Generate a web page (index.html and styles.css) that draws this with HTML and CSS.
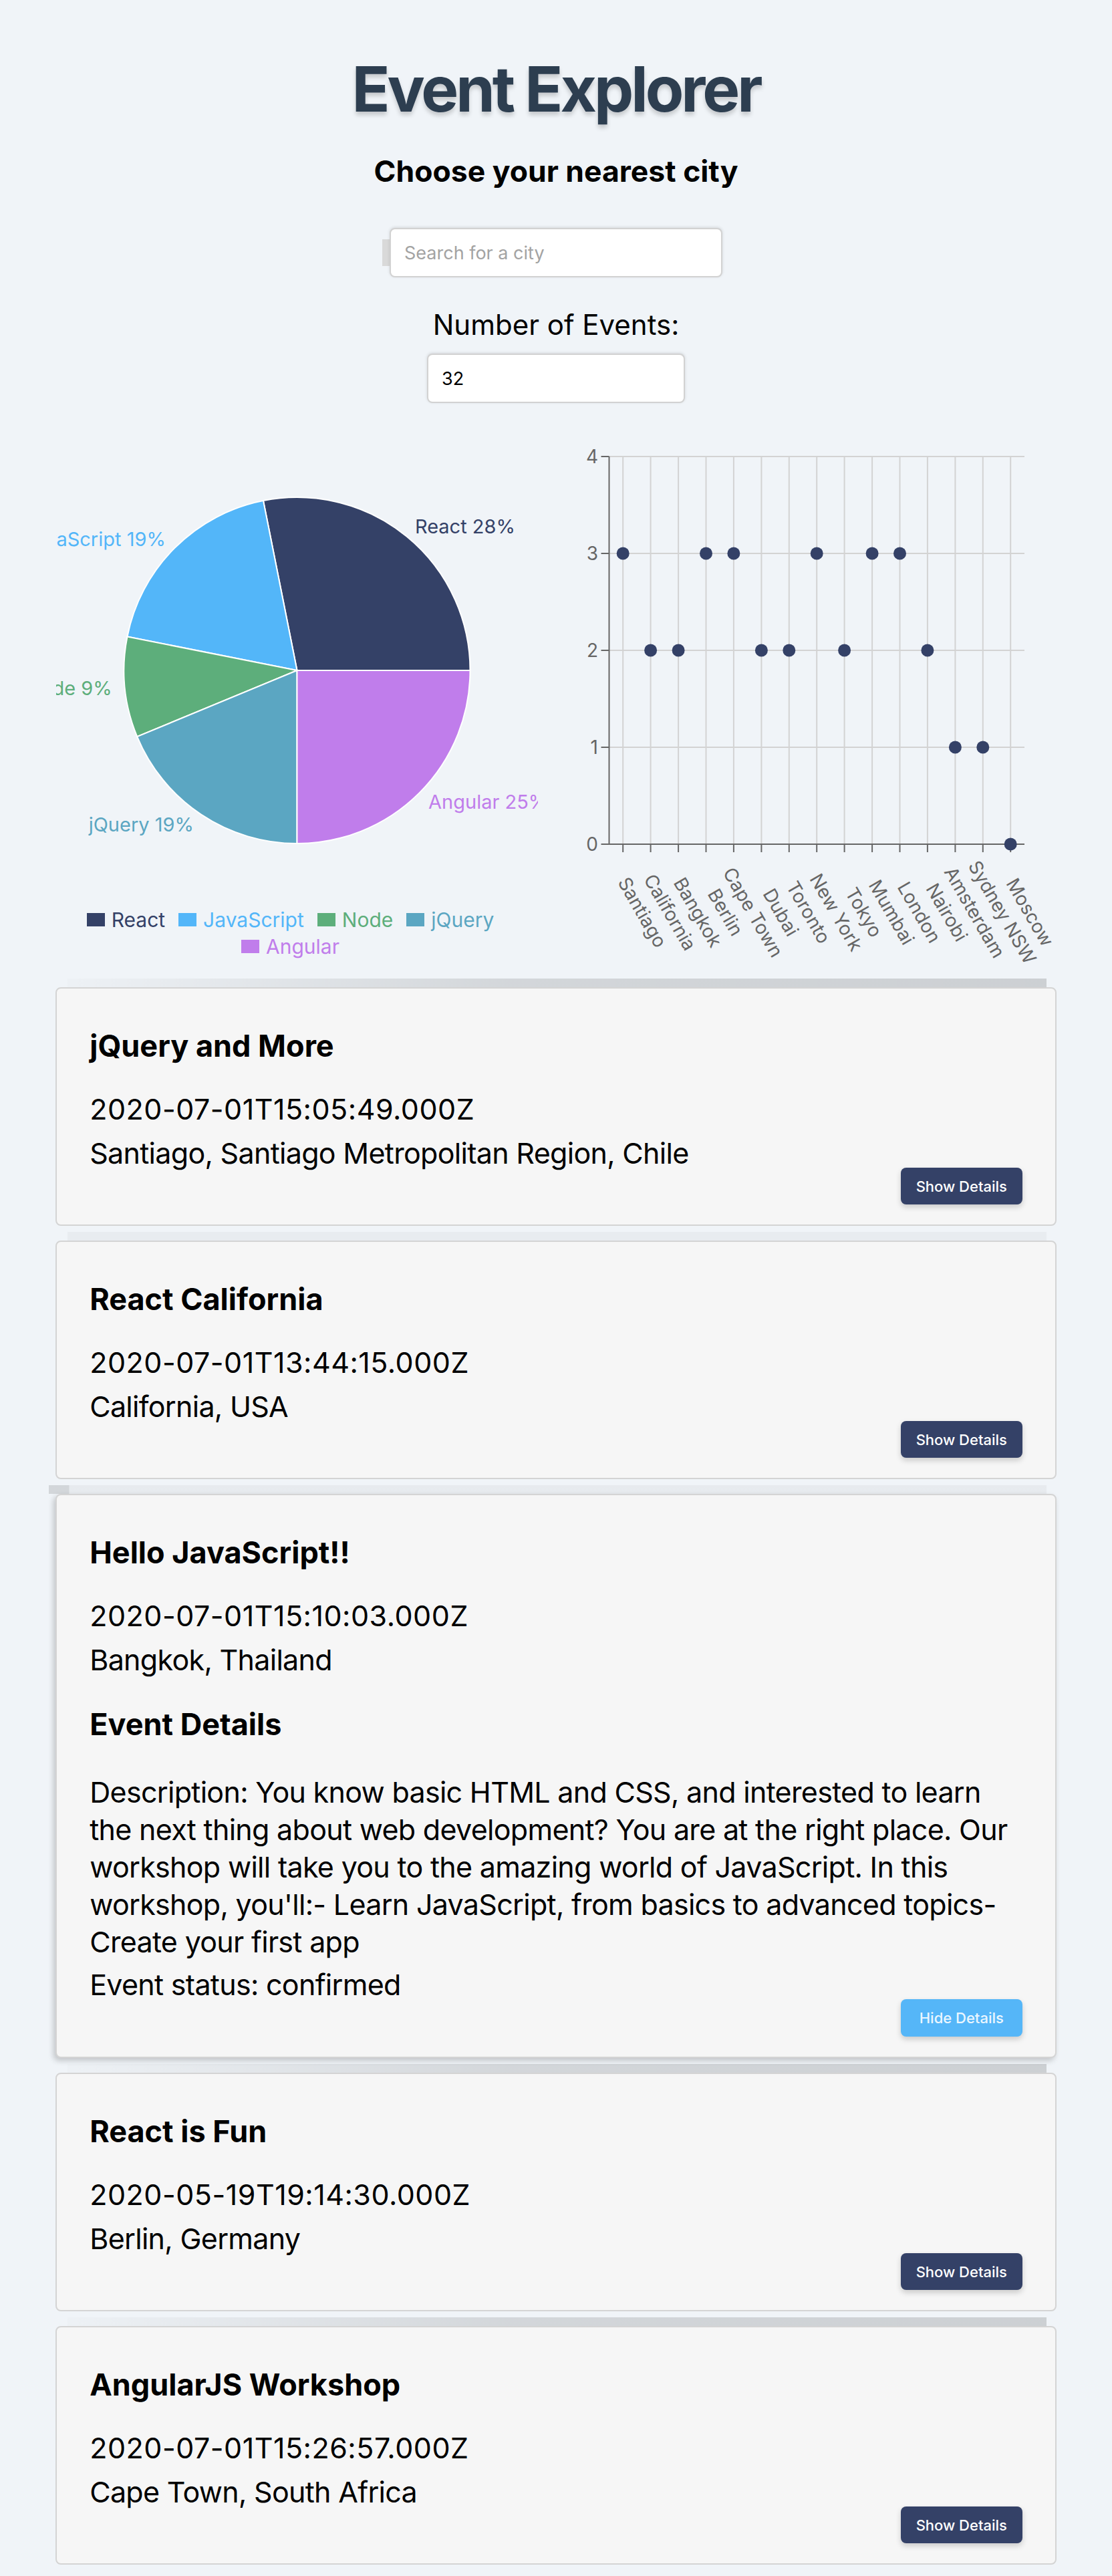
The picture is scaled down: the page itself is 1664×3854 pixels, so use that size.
FILE: index.html
```html
<!DOCTYPE html>
<html lang="en">
<head>
<meta charset="utf-8">
<title>Event Explorer</title>
<link rel="stylesheet" href="styles.css">
</head>
<body>
<div class="app">
  <h1 class="app-title">Event Explorer</h1>
  <h2 class="city-heading">Choose your nearest city</h2>
  <div class="city-search">
    <span class="search-shadow"></span>
    <input class="city-input" type="text" placeholder="Search for a city">
  </div>
  <div class="number-events">
    <label class="number-label" for="number-input">Number of Events:</label>
    <input class="number-input" id="number-input" type="text" value="32">
  </div>

  <div class="charts">
    <div class="pie-wrap">
      <svg class="pie" width="721" height="690" viewBox="0 0 721 690">
        <g class="slices">
          <path fill="#344167" d="M360.5,343 L619.5,343 A259,259 0 0 0 309.97,88.98 Z"/>
          <path fill="#53b6f9" d="M360.5,343 L309.97,88.98 A259,259 0 0 0 106.48,292.47 Z"/>
          <path fill="#5dae7b" d="M360.5,343 L106.48,292.47 A259,259 0 0 0 121.21,442.12 Z"/>
          <path fill="#5ba6c2" d="M360.5,343 L121.21,442.12 A259,259 0 0 0 360.5,602 Z"/>
          <path fill="#c07deb" d="M360.5,343 L360.5,602 A259,259 0 0 0 619.5,343 Z"/>
        </g>
        <g class="pie-labels">
          <text x="536.9" y="128.1" dy="0.35em" fill="#344167">React 28%</text>
          <text x="163.9" y="146.4" dy="0.35em" text-anchor="end" fill="#53b6f9">JavaScript 19%</text>
          <text x="83.8" y="370.2" dy="0.35em" text-anchor="end" fill="#5dae7b">Node 9%</text>
          <text x="206" y="574.2" dy="0.35em" text-anchor="end" fill="#5ba6c2">jQuery 19%</text>
          <text x="557.1" y="539.6" dy="0.35em" fill="#c07deb">Angular 25%</text>
        </g>
      </svg>
      <ul class="legend">
        <li class="legend-item legend-react"><span class="legend-icon"></span>React</li>
        <li class="legend-item legend-js"><span class="legend-icon"></span>JavaScript</li>
        <li class="legend-item legend-node"><span class="legend-icon"></span>Node</li>
        <li class="legend-item legend-jquery"><span class="legend-icon"></span>jQuery</li>
        <li class="legend-item legend-angular"><span class="legend-icon"></span>Angular</li>
      </ul>
    </div>

    <svg class="scatter" width="800" height="800" viewBox="0 0 800 800">
      <g class="grid">
        <line x1="71.5" y1="23" x2="693" y2="23"/>
        <line x1="71.5" y1="168" x2="693" y2="168"/>
        <line x1="71.5" y1="313" x2="693" y2="313"/>
        <line x1="71.5" y1="458" x2="693" y2="458"/>
        <line x1="92.2" y1="23" x2="92.2" y2="603"/>
        <line x1="133.6" y1="23" x2="133.6" y2="603"/>
        <line x1="175.1" y1="23" x2="175.1" y2="603"/>
        <line x1="216.5" y1="23" x2="216.5" y2="603"/>
        <line x1="257.9" y1="23" x2="257.9" y2="603"/>
        <line x1="299.4" y1="23" x2="299.4" y2="603"/>
        <line x1="340.8" y1="23" x2="340.8" y2="603"/>
        <line x1="382.2" y1="23" x2="382.2" y2="603"/>
        <line x1="423.6" y1="23" x2="423.6" y2="603"/>
        <line x1="465.1" y1="23" x2="465.1" y2="603"/>
        <line x1="506.5" y1="23" x2="506.5" y2="603"/>
        <line x1="547.9" y1="23" x2="547.9" y2="603"/>
        <line x1="589.4" y1="23" x2="589.4" y2="603"/>
        <line x1="630.8" y1="23" x2="630.8" y2="603"/>
        <line x1="672.2" y1="23" x2="672.2" y2="603"/>
      </g>
      <g class="axis">
        <line x1="71.5" y1="23" x2="71.5" y2="604"/>
        <line x1="70.5" y1="603" x2="693" y2="603"/>
        <line x1="59.5" y1="23" x2="71.5" y2="23"/>
        <line x1="59.5" y1="168" x2="71.5" y2="168"/>
        <line x1="59.5" y1="313" x2="71.5" y2="313"/>
        <line x1="59.5" y1="458" x2="71.5" y2="458"/>
        <line x1="59.5" y1="603" x2="71.5" y2="603"/>
        <line x1="92.2" y1="603" x2="92.2" y2="615"/>
        <line x1="133.6" y1="603" x2="133.6" y2="615"/>
        <line x1="175.1" y1="603" x2="175.1" y2="615"/>
        <line x1="216.5" y1="603" x2="216.5" y2="615"/>
        <line x1="257.9" y1="603" x2="257.9" y2="615"/>
        <line x1="299.4" y1="603" x2="299.4" y2="615"/>
        <line x1="340.8" y1="603" x2="340.8" y2="615"/>
        <line x1="382.2" y1="603" x2="382.2" y2="615"/>
        <line x1="423.6" y1="603" x2="423.6" y2="615"/>
        <line x1="465.1" y1="603" x2="465.1" y2="615"/>
        <line x1="506.5" y1="603" x2="506.5" y2="615"/>
        <line x1="547.9" y1="603" x2="547.9" y2="615"/>
        <line x1="589.4" y1="603" x2="589.4" y2="615"/>
        <line x1="630.8" y1="603" x2="630.8" y2="615"/>
        <line x1="672.2" y1="603" x2="672.2" y2="615"/>
      </g>
      <g class="y-ticks">
        <text x="55" y="23" dy="0.35em">4</text>
        <text x="55" y="168" dy="0.35em">3</text>
        <text x="55" y="313" dy="0.35em">2</text>
        <text x="55" y="458" dy="0.35em">1</text>
        <text x="55" y="603" dy="0.35em">0</text>
      </g>
      <g class="dots">
        <circle cx="92.2" cy="168" r="9.5"/>
        <circle cx="133.6" cy="313" r="9.5"/>
        <circle cx="175.1" cy="313" r="9.5"/>
        <circle cx="216.5" cy="168" r="9.5"/>
        <circle cx="257.9" cy="168" r="9.5"/>
        <circle cx="299.4" cy="313" r="9.5"/>
        <circle cx="340.8" cy="313" r="9.5"/>
        <circle cx="382.2" cy="168" r="9.5"/>
        <circle cx="423.6" cy="313" r="9.5"/>
        <circle cx="465.1" cy="168" r="9.5"/>
        <circle cx="506.5" cy="168" r="9.5"/>
        <circle cx="547.9" cy="313" r="9.5"/>
        <circle cx="589.4" cy="458" r="9.5"/>
        <circle cx="630.8" cy="458" r="9.5"/>
        <circle cx="672.2" cy="603" r="9.5"/>
      </g>
      <g class="x-ticks">
        <text x="121.2" y="705" dy="0.35em" transform="rotate(60 121.2 705)">Santiago</text>
        <text x="162.6" y="705" dy="0.35em" transform="rotate(60 162.6 705)">California</text>
        <text x="204.1" y="705" dy="0.35em" transform="rotate(60 204.1 705)">Bangkok</text>
        <text x="245.5" y="705" dy="0.35em" transform="rotate(60 245.5 705)">Berlin</text>
        <text x="286.9" y="705" dy="0.35em" transform="rotate(60 286.9 705)">Cape Town</text>
        <text x="328.4" y="705" dy="0.35em" transform="rotate(60 328.4 705)">Dubai</text>
        <text x="369.8" y="705" dy="0.35em" transform="rotate(60 369.8 705)">Toronto</text>
        <text x="411.2" y="705" dy="0.35em" transform="rotate(60 411.2 705)">New York</text>
        <text x="452.6" y="705" dy="0.35em" transform="rotate(60 452.6 705)">Tokyo</text>
        <text x="494.1" y="705" dy="0.35em" transform="rotate(60 494.1 705)">Mumbai</text>
        <text x="535.5" y="705" dy="0.35em" transform="rotate(60 535.5 705)">London</text>
        <text x="576.9" y="705" dy="0.35em" transform="rotate(60 576.9 705)">Nairobi</text>
        <text x="618.4" y="705" dy="0.35em" transform="rotate(60 618.4 705)">Amsterdam</text>
        <text x="659.8" y="705" dy="0.35em" transform="rotate(60 659.8 705)">Sydney NSW</text>
        <text x="701.2" y="705" dy="0.35em" transform="rotate(60 701.2 705)">Moscow</text>
      </g>
    </svg>
  </div>

  <ul class="event-list">
    <li class="event shade">
      <h2 class="event-title">jQuery and More</h2>
      <p class="event-date">2020-07-01T15:05:49.000Z</p>
      <p class="event-location">Santiago, Santiago Metropolitan Region, Chile</p>
      <div class="event-actions"><button class="details-btn" type="button">Show Details</button></div>
    </li>
    <li class="event soft">
      <h2 class="event-title">React California</h2>
      <p class="event-date">2020-07-01T13:44:15.000Z</p>
      <p class="event-location">California, USA</p>
      <div class="event-actions"><button class="details-btn" type="button">Show Details</button></div>
    </li>
    <li class="event raised">
      <h2 class="event-title">Hello JavaScript!!</h2>
      <p class="event-date">2020-07-01T15:10:03.000Z</p>
      <p class="event-location">Bangkok, Thailand</p>
      <div class="event-details">
        <h3 class="details-heading">Event Details</h3>
        <p class="details-desc">Description: You know basic HTML and CSS, and interested to learn the next thing about web development? You are at the right place. Our workshop will take you to the amazing world of JavaScript. In this workshop, you'll:- Learn JavaScript, from basics to advanced topics- Create your first app</p>
        <p class="details-status">Event status: confirmed</p>
      </div>
      <div class="event-actions"><button class="details-btn is-open" type="button">Hide Details</button></div>
    </li>
    <li class="event shade">
      <h2 class="event-title">React is Fun</h2>
      <p class="event-date">2020-05-19T19:14:30.000Z</p>
      <p class="event-location">Berlin, Germany</p>
      <div class="event-actions"><button class="details-btn" type="button">Show Details</button></div>
    </li>
    <li class="event shade">
      <h2 class="event-title">AngularJS Workshop</h2>
      <p class="event-date">2020-07-01T15:26:57.000Z</p>
      <p class="event-location">Cape Town, South Africa</p>
      <div class="event-actions"><button class="details-btn" type="button">Show Details</button></div>
    </li>
  </ul>
</div>
</body>
</html>
```
FILE: styles.css
```css
html, body {
  margin: 0;
  padding: 0;
  background: #f0f4f8;
}

body {
  font-family: Inter, "Noto Sans", sans-serif;
  color: #000;
}

.app-title {
  margin: 78px 0 0;
  font-size: 94px;
  line-height: 110px;
  font-weight: 700;
  letter-spacing: -4px;
  text-align: center;
  color: #2d3e50;
  text-shadow: 0 5px 6px rgba(0, 0, 0, 0.18);
}

.city-heading {
  margin: 41px 0 0;
  font-size: 44.5px;
  line-height: 54px;
  font-weight: 700;
  text-align: center;
}

.city-search {
  position: relative;
  width: 498px;
  margin: 58px auto 0;
}

.search-shadow {
  position: absolute;
  left: -11px;
  top: 17px;
  width: 12px;
  height: 40px;
  background: #d9d9d9;
}

.city-input,
.number-input {
  position: relative;
  display: block;
  box-sizing: border-box;
  height: 74px;
  padding: 0 20px;
  border: 2px solid #d2d2d2;
  border-radius: 8px;
  background: #fff;
  font-family: Inter, "Noto Sans", sans-serif;
  font-size: 27px;
  color: #000;
  box-shadow: 0 -1px 4px rgba(0, 0, 0, 0.12);
  outline: none;
}

.city-input {
  width: 498px;
}

.city-input::placeholder {
  color: #a3a3a3;
}

.number-events {
  margin-top: 46px;
  text-align: center;
}

.number-label {
  display: block;
  font-size: 42px;
  line-height: 50px;
}

.number-input {
  width: 386px;
  margin: 18px auto 0;
}

/* charts */
.charts {
  display: flex;
  align-items: flex-start;
  gap: 35px;
  height: 800px;
  margin-top: 57px;
  padding-left: 84px;
}

.pie-wrap {
  width: 721px;
}

.pie {
  display: block;
}

.slices path {
  stroke: #fff;
  stroke-width: 2;
}

.pie-labels text {
  font-family: Inter, "Noto Sans", sans-serif;
  font-size: 29px;
}

.legend {
  display: flex;
  flex-wrap: wrap;
  justify-content: center;
  margin: 6px 0 0;
  padding: 0;
  list-style: none;
  font-size: 30px;
  line-height: 40px;
}

.legend-item {
  display: flex;
  align-items: center;
  margin-right: 20px;
}

.legend-icon {
  display: inline-block;
  width: 27px;
  height: 20px;
  margin-right: 10px;
  background: currentColor;
}

.legend-react { color: #344167; }
.legend-js { color: #53b6f9; }
.legend-node { color: #5dae7b; }
.legend-jquery { color: #5ba6c2; }
.legend-angular { color: #c07deb; }

.scatter {
  display: block;
}

.grid line {
  stroke: #d3d3d3;
  stroke-width: 2;
}

.axis line {
  stroke: #666;
  stroke-width: 2;
}

.y-ticks text {
  font-family: Inter, "Noto Sans", sans-serif;
  font-size: 28px;
  fill: #666;
  text-anchor: end;
}

.x-ticks text {
  font-family: Inter, "Noto Sans", sans-serif;
  font-size: 28px;
  fill: #666;
  text-anchor: middle;
}

.dots circle {
  fill: #344167;
}

/* events */
.event-list {
  list-style: none;
  margin: 17px 0 0;
  padding: 0;
}

.event {
  position: relative;
  box-sizing: border-box;
  width: 90%;
  margin: 0 auto 22px;
  padding: 59px 49px 30px;
  background: #f6f6f6;
  border: 2px solid #d4d4d4;
  border-radius: 8px;
}

.event::before {
  content: "";
  position: absolute;
  left: 16px;
  right: 13px;
  top: -15px;
  height: 13px;
}

.event.shade::before {
  background: linear-gradient(90deg, rgba(0, 0, 0, 0.01) 0%, rgba(0, 0, 0, 0.12) 45%, rgba(0, 0, 0, 0.15) 100%);
}

.event.soft::before {
  background: rgba(0, 0, 0, 0.03);
}

.event.raised {
  box-shadow: -3px 4px 8px rgba(0, 0, 0, 0.2);
}

.event.raised::before {
  left: -12px;
  background: linear-gradient(90deg, rgba(0, 0, 0, 0.12) 0, rgba(0, 0, 0, 0.12) 30px, rgba(0, 0, 0, 0.04) 31px, rgba(0, 0, 0, 0.04) 100%);
}

.event-title,
.details-heading {
  margin: 0;
  font-size: 45px;
  line-height: 54px;
  font-weight: 700;
}

.event-date,
.event-location,
.details-desc,
.details-status {
  margin: 0;
  font-size: 43px;
  line-height: 56px;
  letter-spacing: -0.7px;
}

.event-date {
  margin-top: 39px;
  letter-spacing: 0.5px;
}

.event-location {
  margin-top: 10px;
}

.details-heading {
  margin-top: 42px;
}

.details-desc {
  margin-top: 46px;
}

.details-status {
  margin-top: 8px;
}

.event-actions {
  display: flex;
  justify-content: flex-end;
  margin-top: -6px;
}

.details-btn {
  width: 182px;
  height: 55px;
  padding: 0;
  border: 0;
  border-radius: 8px;
  background: #344167;
  color: #fff;
  font-family: Inter, "Noto Sans", sans-serif;
  font-size: 22px;
  font-weight: 500;
  box-shadow: 0 4px 8px rgba(0, 0, 0, 0.18);
  cursor: pointer;
}

.details-btn.is-open {
  height: 56px;
  background: #55b6f8;
  color: #eaf6ff;
}
```
